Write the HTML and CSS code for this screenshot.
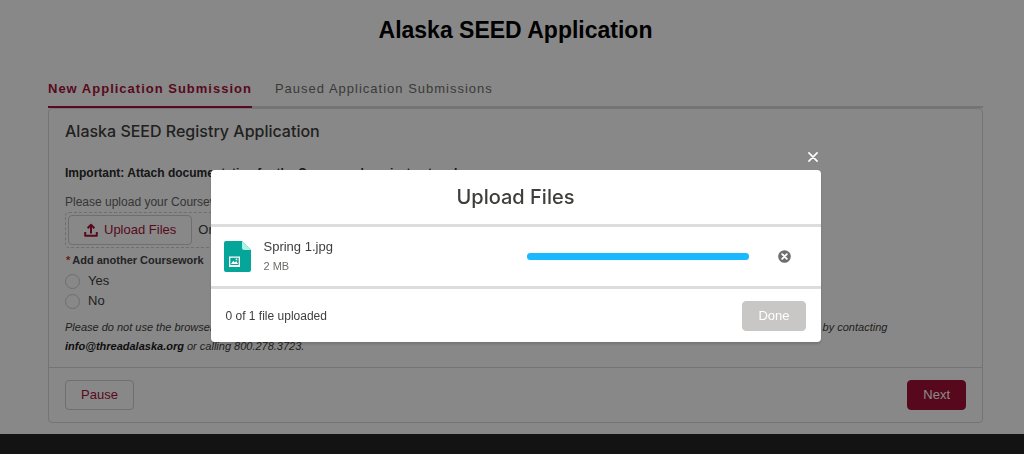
FILE: index.html
```html
<!DOCTYPE html>
<html lang="en">
<head>
<meta charset="utf-8">
<title>Alaska SEED Application</title>
<link rel="stylesheet" href="styles.css">
</head>
<body class="page">
<main class="content">
  <h1 class="page-title">Alaska SEED Application</h1>
  <nav class="tabs">
    <a class="tab tab-active" href="#new">New Application Submission</a>
    <a class="tab" href="#paused">Paused Application Submissions</a>
  </nav>
  <form class="card">
    <div class="card-body">
      <h2 class="card-title">Alaska SEED Registry Application</h2>
      <p class="important">Important: Attach documentation for the Coursework project entered</p>
      <p class="hint">Please upload your Coursework documentation</p>
      <div class="dropzone">
        <button class="btn btn-upload" type="button">
          <svg class="upload-icon" viewBox="0 0 14 14" fill="none" stroke="currentColor" stroke-width="2" stroke-linejoin="round"><path d="M1.200 9v3.800h11.600V9M7 10.500V2M3.600 5.200 7 1.800l3.400 3.400"/></svg>
          Upload Files
        </button>
        <span class="drop-text">Or drop files</span>
      </div>
      <fieldset class="question">
        <legend class="question-label"><span class="required">*</span>Add another Coursework</legend>
        <label class="choice"><input class="radio" type="radio" name="another">Yes</label>
        <label class="choice"><input class="radio" type="radio" name="another">No</label>
      </fieldset>
      <p class="note">Please do not use the browser back button while completing this form. If you have any questions, you can reach the SEED Registry staff for any assistance by contacting <strong class="email">info@threadalaska.org</strong> or calling 800.278.3723.</p>
    </div>
    <div class="card-footer">
      <button class="btn" type="button">Pause</button>
      <button class="btn btn-next" type="button">Next</button>
    </div>
  </form>
</main>
<footer class="site-footer"></footer>

<div class="backdrop">
  <section class="modal" role="dialog" aria-modal="true" aria-labelledby="modal-title">
    <button class="modal-close" type="button" aria-label="Close">
      <svg class="close-icon" viewBox="0 0 10 10" fill="none" stroke="currentColor" stroke-width="1.6" stroke-linecap="round"><path d="M.9.9l8.200 8.200M9.100.9.9 9.100"/></svg>
    </button>
    <header class="modal-header"><h2 class="modal-title" id="modal-title">Upload Files</h2></header>
    <div class="file-row">
      <svg class="file-icon" viewBox="0 0 27 31"><path fill="#06a59a" d="M2 0h16l9 9v20a2 2 0 0 1-2 2H2a2 2 0 0 1-2-2V2a2 2 0 0 1 2-2z"/><path fill="#acf3e4" d="M18 0l9 9h-7a2 2 0 0 1-2-2z"/><path fill="#fff" fill-rule="evenodd" d="M5 15.500h11v10.500H5zM6.300 16.800v7.200h8.400v-7.200z"/><path fill="#fff" d="M7 23l2.300-3.200 1.500 1.600 1.300-1.500 2 3.100z"/><circle cx="12.500" cy="18.400" r=".9" fill="#fff"/></svg>
      <div class="file-info">
        <span class="file-name">Spring 1.jpg</span>
        <span class="file-size">2 MB</span>
      </div>
      <div class="progress" role="progressbar" aria-label="Spring 1.jpg" aria-valuenow="100"><div class="progress-value" style="width:100%"></div></div>
      <button class="cancel" type="button" aria-label="Cancel upload">
        <svg class="cancel-icon" viewBox="0 0 13 13"><circle cx="6.500" cy="6.500" r="6.300" fill="#706e6b"/><path d="M4.200 4.200l4.600 4.600M8.800 4.200 4.200 8.800" stroke="#fff" stroke-width="1.900" stroke-linecap="round"/></svg>
      </button>
    </div>
    <footer class="modal-footer">
      <span class="status">0 of 1 file uploaded</span>
      <button class="btn btn-done" type="button" disabled>Done</button>
    </footer>
  </section>
</div>
</body>
</html>
```
FILE: styles.css
```css
* { box-sizing: border-box; }

.page {
  margin: 0;
  min-height: 100vh;
  display: flex;
  flex-direction: column;
  background: #fff;
  color: #3e3e3c;
  font: 13px/20px "Liberation Sans", Arial, sans-serif;
}

.content { padding: 16px 41px 11px 48px; }

.page-title {
  margin: 0 0 35px;
  text-align: center;
  color: #000;
  font-size: 23px;
  line-height: 28px;
}

.tabs {
  display: flex;
  gap: 23px;
  border-bottom: 2px solid #dadada;
}

.tab {
  margin-bottom: -2px;
  padding-bottom: 8px;
  color: #706e6b;
  font-size: 13px;
  line-height: 19px;
  letter-spacing: 1px;
  text-decoration: none;
}

.tab-active {
  border-bottom: 2px solid #a6123a;
  color: #a6123a;
  font-weight: bold;
}

.card {
  border: 1px solid #dadada;
  border-radius: 4px;
}

.card-body { padding: 12px 16px 11px; }

.card-title {
  margin: 0 0 22px;
  font: 500 16px/20px Inter, "Liberation Sans", sans-serif;
}

.important {
  margin: 0 0 9px;
  color: #2b2b2b;
  font-size: 12px;
  font-weight: bold;
}

.hint {
  margin: 0;
  color: #666;
  font-size: 12px;
}

.dropzone {
  display: flex;
  align-items: center;
  gap: 6px;
  width: 260px;
  padding: 2px;
  border: 1px dashed #d0d0d0;
  border-radius: 4px;
}

.btn {
  height: 30px;
  padding: 0 15px;
  border: 1px solid #d0d0d0;
  border-radius: 4px;
  background: #fff;
  color: #a6123a;
  font: 13px/18px "Liberation Sans", Arial, sans-serif;
}

.btn-upload {
  display: flex;
  align-items: center;
  gap: 6px;
}

.upload-icon { width: 14px; height: 14px; }

.drop-text { font-size: 13px; }

.question {
  margin: 0;
  padding: 0;
  border: 0;
}

.question-label {
  padding: 2px 0 1px;
  color: #444;
  font-size: 11px;
  font-weight: bold;
}

.required { margin: 0 2px 0 1px; color: #c23934; }

.choice {
  display: flex;
  align-items: center;
  gap: 8px;
  font-size: 13px;
}

.radio {
  appearance: none;
  width: 15px;
  height: 15px;
  margin: 0;
  border: 1px solid #d0d0d0;
  border-radius: 50%;
}

.note {
  margin: 7px 0 0;
  font-size: 11px;
  line-height: 19px;
  font-style: italic;
}

.email { color: #181818; }

.card-footer {
  display: flex;
  justify-content: space-between;
  padding: 12px 16px;
  border-top: 1px solid #dadada;
}

.btn-next {
  border-color: #a50f35;
  background: #a50f35;
  color: #fff;
}

.site-footer { flex: 1; background: #242424; }

.backdrop {
  position: fixed;
  inset: 0;
  display: flex;
  align-items: center;
  justify-content: center;
  padding: 58px 20px 0 27px;
  background: rgba(0, 0, 0, 0.467);
}

.modal {
  position: relative;
  width: 100%;
  max-width: 610px;
  border-radius: 4px;
  background: #fff;
  box-shadow: 0 2px 3px rgba(0, 0, 0, 0.16);
}

.modal-close {
  position: absolute;
  right: 0;
  bottom: 100%;
  display: flex;
  padding: 8px 3px;
  border: 0;
  background: none;
  color: #fff;
}

.close-icon { width: 10px; height: 10px; }

.modal-header {
  padding: 14px 14px 13px;
  border-bottom: 3px solid #dddddd;
}

.modal-title {
  margin: 0;
  text-align: center;
  font: 500 20px/27px Inter, "Liberation Sans", sans-serif;
}

.file-row {
  display: flex;
  align-items: center;
  padding: 10px 30px 11px 13px;
}

.file-icon { width: 27px; height: 31px; }

.file-info {
  display: flex;
  flex: 1;
  flex-direction: column;
  padding-left: 13px;
}

.file-name { font-size: 13px; }

.file-size { color: #706e6b; font-size: 11px; line-height: 18px; }

.progress {
  width: 222px;
  height: 7px;
  margin-right: 29px;
  border-radius: 4px;
  background: #ddd;
}

.progress-value {
  height: 100%;
  border-radius: 4px;
  background: #1ab9ff;
}

.cancel {
  display: flex;
  padding: 0;
  border: 0;
  background: none;
}

.cancel-icon { width: 13px; height: 13px; }

.modal-footer {
  display: flex;
  align-items: center;
  justify-content: space-between;
  padding: 12px 15px 11px;
  border-top: 3px solid #dddddd;
}

.status { font-size: 12px; }

.btn-done {
  border-color: #c9c7c5;
  background: #c9c7c5;
  color: #fff;
}
```
